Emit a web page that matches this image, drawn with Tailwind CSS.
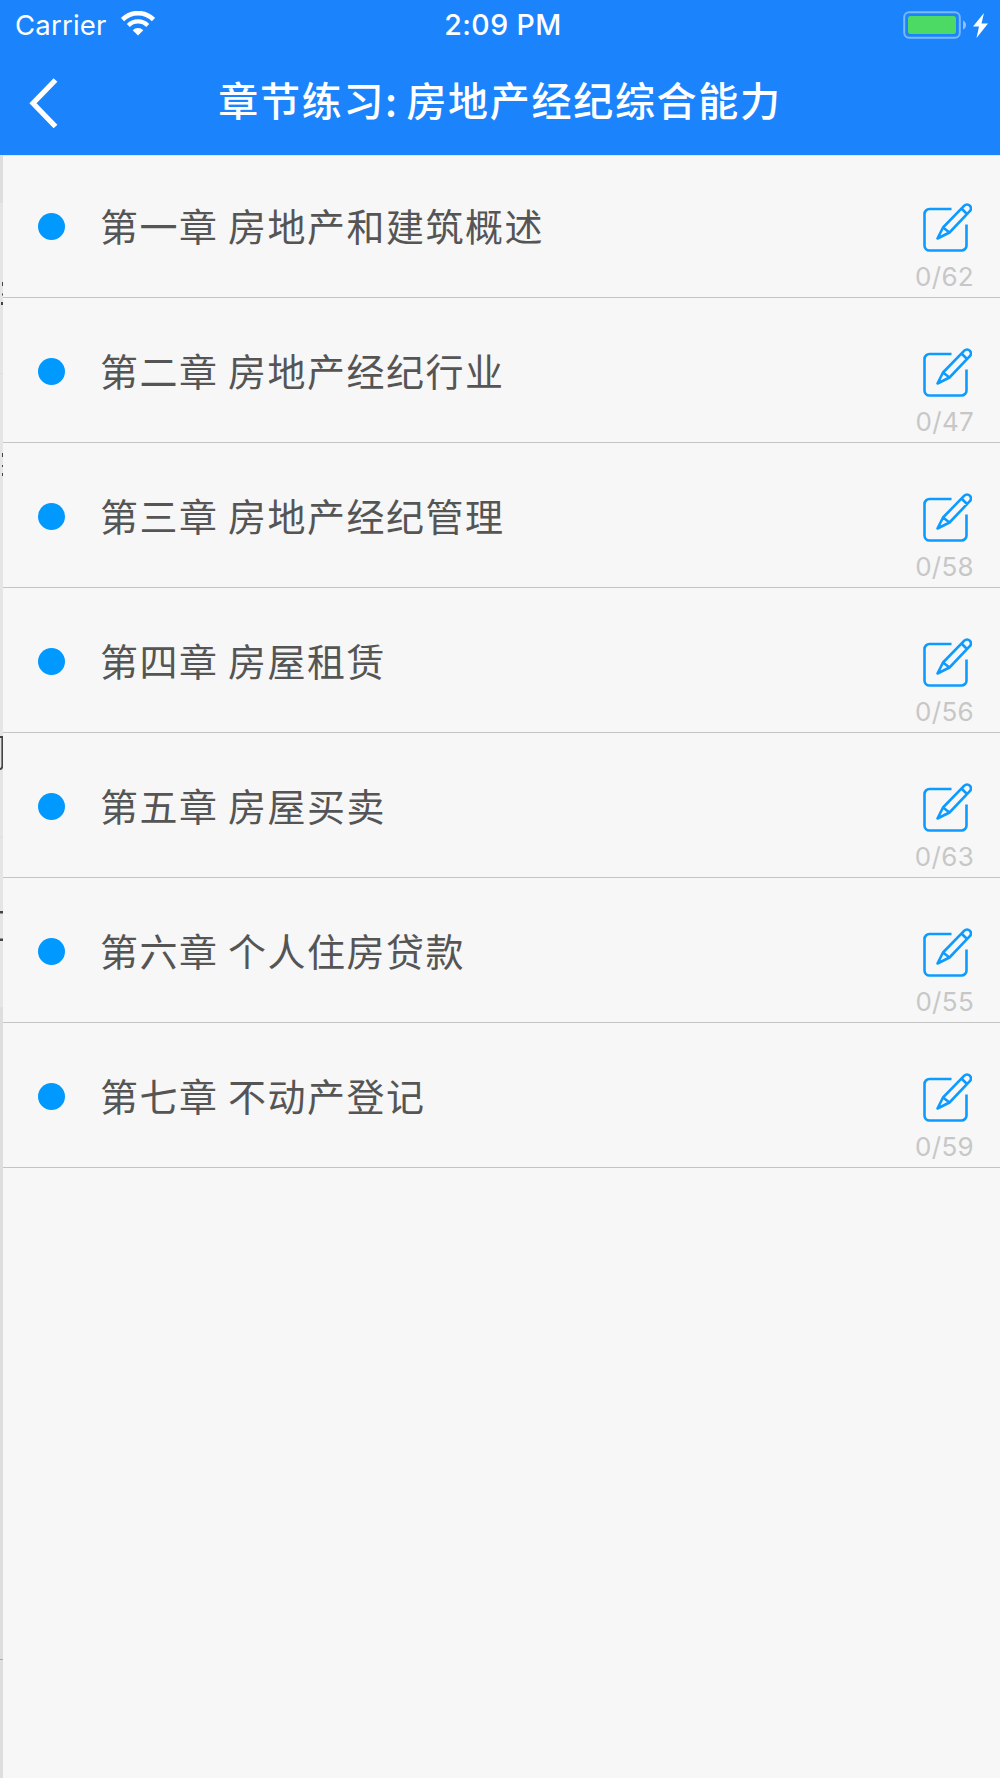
<!DOCTYPE html>
<html lang="zh-CN">
<head>
<meta charset="utf-8">
<title>章节练习</title>
<script src="https://cdn.jsdelivr.net/npm/@tailwindcss/browser@4"></script>
</head>
<body class="h-[1778px] w-[1000px] overflow-hidden bg-[#f7f7f7] font-['Inter','Noto_Sans_CJK_SC',sans-serif]">
<svg width="0" height="0" class="absolute">
  <symbol id="edit" viewBox="0 0 50 50">
    <g fill="none" stroke="#0d9bff" stroke-width="2.6" stroke-linejoin="round">
      <path d="M29.5 6H7.500a5 5 0 0 0-5 5v31.500a5 5 0 0 0 5 5h32a5 5 0 0 0 5-5V21.500"/>
      <path d="M15.500 35.500 21 24.500 42.300 2.700a3.800 3.800 0 0 1 5.500 0 3.800 3.800 0 0 1 0 5.500L27.500 29.500ZM21 24.500 27.500 29.500M39.500 5.500 45 11"/>
    </g>
  </symbol>
</svg>
<div class="flex h-full flex-col">
  <header class="h-[155px] shrink-0 bg-[#1b84fc] text-white">
    <div class="grid h-[50px] grid-cols-3 items-center pr-[11px] pl-[15px]">
      <div class="flex items-center gap-[14px]">
        <span class="text-[27.500px] leading-[50px] tracking-[0.2px]">Carrier</span>
        <svg class="-mt-[3px]" width="34" height="25" viewBox="0 0 34 25" fill="none" stroke="#fff">
          <path d="M1.500 8.500a22 22 0 0 1 31 0" stroke-width="4.600"/>
          <path d="M7.300 14.500a13.700 13.700 0 0 1 19.400 0" stroke-width="4.300"/>
          <path d="M17 24.500 11.700 19.200a7.500 7.500 0 0 1 10.600 0Z" fill="#fff" stroke="none"/>
        </svg>
      </div>
      <span class="pl-[2px] text-center text-[28.500px] font-medium leading-[50px] tracking-[0.400px]">2:09 PM</span>
      <div class="flex items-center justify-end">
        <svg width="86" height="30" viewBox="903 9 86 30">
          <rect x="904.200" y="11.200" width="55.600" height="25.600" rx="5" fill="none" stroke="#fff" stroke-opacity=".42" stroke-width="2"/>
          <rect x="908" y="15" width="48" height="18" rx="2.500" fill="#4cd964"/>
          <path d="M963 19.500q3 1.500 3 4.500t-3 4.500Z" fill="#fff" fill-opacity=".5"/>
          <path d="M984 12 973 25.500h6L976.500 37 988 22.500h-6.500Z" fill="#fff"/>
        </svg>
      </div>
    </div>
    <div class="grid h-[105px] grid-cols-[100px_1fr_100px] items-center">
      <svg class="ml-[28px]" width="32" height="50" viewBox="0 0 32 50"><path d="M27.500 2 5 25.300 27.500 48.500" fill="none" stroke="#fff" stroke-width="5.200"/></svg>
      <h1 class="-mt-[7px] whitespace-nowrap text-center font-['Noto_Sans_CJK_SC',sans-serif] text-[40px] font-medium leading-[60px] tracking-[1.700px] [word-spacing:-3px]">章节练习: 房地产经纪综合能力</h1>
    </div>
  </header>
  <div class="flex min-h-0 flex-1">
    <aside class="relative w-[3px] shrink-0 bg-[#dedede]">
      <div class="mt-[48px] h-[804px] bg-[#e5e5e5]"></div>
      <svg class="absolute top-0 left-0" width="3" height="1623" viewBox="0 155 3 1623">
        <g fill="#444"><path d="M2 282h1v4h-1zM2 293.500h1v2h-1zM1 302h2v3H1zM2 453h1v4h-1zM2 465h1v2h-1zM2 473h1v3h-1z"/><path d="M0 911h3v2.500H0zM0 938.500h3v2.500H0z"/></g>
        <path d="M0 737h2.300v29q0 3-2.300 3" fill="none" stroke="#444" stroke-width="1.800"/>
        <path d="M0 373.500h3M0 837h3" stroke="#dcdcdc"/>
        <path d="M0 1659.500h3" stroke="#aaa"/>
      </svg>
    </aside>
    <main id="chapters" class="flex-1 border-t border-[#e5e5e5]"></main>
  </div>
</div>
<template id="row">
  <div class="flex h-[145px] items-end justify-between border-b border-[#c4c4c4] pr-[26px] pl-[35px] first:h-[142px]">
    <div class="flex items-center gap-[35px] pb-[42px]">
      <i class="size-[27px] rounded-full bg-[#0099ff]"></i>
      <span class="-mt-[3px] font-['Noto_Sans_CJK_SC',sans-serif] text-[38px] leading-[60px] tracking-[1.500px] [word-spacing:-0.500px] text-[#555]"></span>
    </div>
    <div class="flex flex-col items-end">
      <svg class="mr-[2px]" width="50" height="50"><use href="#edit"/></svg>
      <b class="mt-[7px] mb-[3px] text-[26px] font-normal leading-[34px] tracking-[0.300px] text-[#c7c7c7]"></b>
    </div>
  </div>
</template>
<script>
const chapters = [
  ['第一章 房地产和建筑概述', 62], ['第二章 房地产经纪行业', 47], ['第三章 房地产经纪管理', 58],
  ['第四章 房屋租赁', 56], ['第五章 房屋买卖', 63], ['第六章 个人住房贷款', 55], ['第七章 不动产登记', 59]
];
const list = document.getElementById('chapters');
for (const [name, total] of chapters) {
  const row = document.getElementById('row').content.cloneNode(true);
  row.querySelector('span').textContent = name;
  row.querySelector('b').textContent = '0/' + total;
  list.append(row);
}
</script>
</body>
</html>
